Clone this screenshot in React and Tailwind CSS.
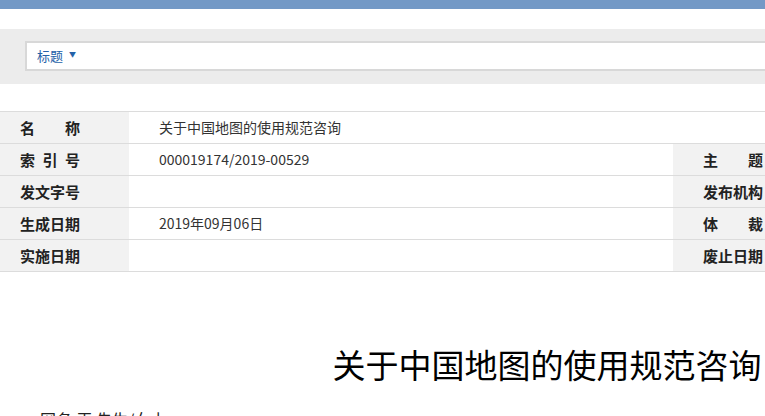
import React from 'react';

const FONT = { fontFamily: '"Noto Sans CJK SC", "Noto Sans", sans-serif' };

const rows = [
  { label: '索引号', value: '000019174/2019-00529', rLabel: '主题' },
  { label: '发文字号', value: '', rLabel: '发布机构' },
  { label: '生成日期', value: '2019年09月06日', rLabel: '体裁' },
  { label: '实施日期', value: '', rLabel: '废止日期' },
];

// 左侧标签，两端对齐
function Label({ text, pad }) {
  return (
    <div className={`bg-[#f2f2f2] h-full flex items-center ${pad}`}>
      <span className="w-[60px] text-[15px] font-bold text-[#222] [text-align-last:justify] leading-none">
        {text}
      </span>
    </div>
  );
}

function App() {
  return (
    <div className="w-[765px] h-[416px] overflow-hidden bg-white" style={FONT}>
      <div className="w-[1094px]">
        {/* 顶部色条 */}
        <div className="h-[9px] bg-[#7399c6]"></div>

        {/* 搜索栏 */}
        <div className="mt-[20px] h-[55px] bg-[#ececec] pt-[12px] pl-[25px]">
          <div className="h-[30px] bg-white border-2 border-[#d8d8d8] flex items-center pl-[10px]">
            <span className="text-[13px] text-[#2462a8]">标题</span>
            <span className="text-[7px] text-[#2462a8] ml-[6px] -mt-[3px]">▼</span>
          </div>
        </div>

        {/* 信息表格 */}
        <div className="mt-[27px] border-t border-[#dcdcdc]">
          <div className="grid grid-cols-[129px_1fr] h-[32px] border-b border-[#dcdcdc]">
            <Label text="名称" pad="pl-[20px]" />
            <div className="flex items-center pl-[30px] text-[14px] text-[#333]">关于中国地图的使用规范咨询</div>
          </div>
          {rows.map((r) => (
            <div
              key={r.label}
              className="grid grid-cols-[129px_544px_129px_1fr] h-[32px] border-b border-[#dcdcdc]"
            >
              <Label text={r.label} pad="pl-[20px]" />
              <div className="flex items-center pl-[30px] text-[14px] text-[#333]">{r.value}</div>
              <Label text={r.rLabel} pad="pl-[30px]" />
              <div></div>
            </div>
          ))}
        </div>

        {/* 标题 */}
        <h1 className="mt-[72px] text-center text-[33px] leading-[40px] font-normal text-black">关于中国地图的使用规范咨询</h1>

        <p className="mt-[23px] pl-[40px] text-[16px] leading-[24px] text-[#222]">网名:王 先生/女士</p>
      </div>
    </div>
  );
}

export default App;
